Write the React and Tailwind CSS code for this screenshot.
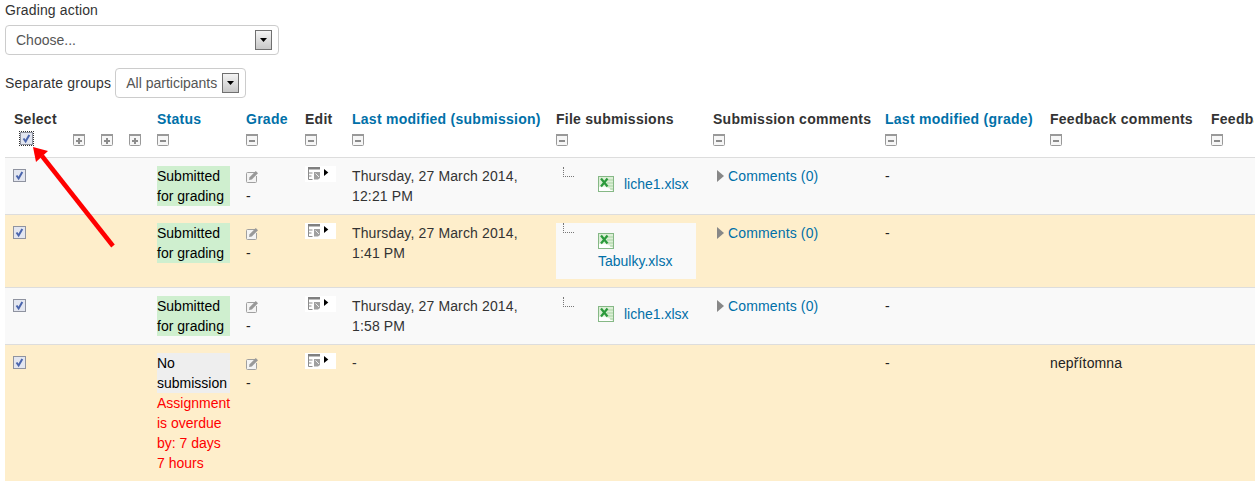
const ACCENT = 'text-[#0070a8]';

function Dropdown({ label, className }) {
  return (
    <div className={`flex h-[30px] items-center justify-between rounded border border-[#cccccc] bg-white tracking-normal text-[#555555] ${className}`}>
      <span>{label}</span>
      <span className="flex h-[20px] w-[17px] items-center justify-center border border-[#707070] bg-gradient-to-b from-[#f4f4f4] to-[#c8c8c8]">
        <svg width="7" height="4" viewBox="0 0 7 4"><path d="M0 0h7L3.5 4z" fill="#000" /></svg>
      </span>
    </div>
  );
}

function ToggleIcon({ plus }) {
  return (
    <svg width="12" height="12" viewBox="0 0 12 12" className="block">
      <rect x="0.5" y="0.5" width="11" height="11" rx="1" fill="#f6f6f6" stroke="#999" />
      <rect x="0" y="0" width="12" height="2" fill="#999" />
      <rect x="3" y="6" width="6" height="2" fill="#8c8c8c" />
      {plus && <rect x="5" y="4" width="2" height="6" fill="#8c8c8c" />}
    </svg>
  );
}

function Check() {
  return (
    <svg width="13" height="13" viewBox="0 0 13 13" className="block">
      <rect x="0.5" y="0.5" width="12" height="12" fill="#e3e6f0" stroke="#8f93a0" />
      <path d="M3.5 6.5 L5.6 9.5 L9.3 3" fill="none" stroke="#4a65ad" strokeWidth="2" />
    </svg>
  );
}

function PenIcon() {
  return (
    <svg width="13" height="13" viewBox="0 0 13 13" className="block">
      <path d="M9 2.5H1.5a1 1 0 0 0-1 1v8a1 1 0 0 0 1 1h8a1 1 0 0 0 1-1V6" fill="#f4f4f4" stroke="#a0a0a0" />
      <path d="M3 10 L3.6 7.2 L9.8 1 L12 3.2 L5.8 9.4z" fill="#999" />
    </svg>
  );
}

function EditMenu() {
  return (
    <span className="flex h-[16px] w-[31px] items-start bg-white pl-[3px] pt-[1px]">
      <svg width="21" height="13" viewBox="0 0 21 13">
        <rect x="0" y="0" width="12" height="2.5" fill="#808080" />
        <path d="M0.5 2v10.5h4M0.5 6h4M0.5 9h3" stroke="#8c8c8c" fill="none" />
        <path d="M6 5h6v6l-2 1.5H6z" fill="#a0a0a0" />
        <path d="M7.5 6.5 L11 10" stroke="#eeeeee" />
        <path d="M16 2 L20.3 5.5 L16 9z" fill="#000" />
      </svg>
    </span>
  );
}

function Excel() {
  return (
    <svg width="16" height="16" viewBox="0 0 16 16" className="block shrink-0">
      <rect x="0.5" y="0.5" width="15" height="15" fill="#dcefd6" stroke="#86b886" />
      <path d="M1 11 Q8 9 15 15 H1z" fill="#ffffff" />
      <path d="M9 4h6M9 7h6M10 10h5M12 13h3" stroke="#a9d3a4" />
      <path d="M3 2.5 L9.5 10.5 M9.5 2.5 L3 10.5" stroke="#2c9a3c" strokeWidth="2.2" />
    </svg>
  );
}

function TreeLine() {
  return <span className="block h-[10px] w-[11px] border-b border-l border-dotted border-[#777777]" />;
}

function FileCell({ name, stacked }) {
  if (stacked) {
    return (
      <div className="h-[56px] w-[140px] bg-[#f9f9f9] pl-[7px]">
        <TreeLine />
        <div className="ml-[35px]"><Excel /></div>
        <a className={`ml-[35px] mt-[2px] block tracking-normal ${ACCENT}`}>{name}</a>
      </div>
    );
  }
  return (
    <div className="h-[40px] pl-[7px] pt-[1px]">
      <TreeLine />
      <div className="ml-[35px] mt-[-3px] flex items-center gap-[10px]">
        <Excel />
        <a className={`tracking-normal ${ACCENT}`}>{name}</a>
      </div>
    </div>
  );
}

function Comments() {
  return (
    <div className="flex items-center gap-[4px] pl-[4px]">
      <svg width="7" height="12" viewBox="0 0 7 12"><path d="M0 0 L7 6 L0 12z" fill="#888" /></svg>
      <a className={ACCENT}>Comments (0)</a>
    </div>
  );
}

const headers = [
  { label: 'Select', icon: 'check' },
  { label: '', icon: 'plus' },
  { label: '', icon: 'plus' },
  { label: '', icon: 'plus' },
  { label: 'Status', link: true },
  { label: 'Grade', link: true },
  { label: 'Edit' },
  { label: 'Last modified (submission)', link: true },
  { label: 'File submissions' },
  { label: 'Submission comments' },
  { label: 'Last modified (grade)', link: true },
  { label: 'Feedback comments' },
  { label: 'Feedback files', clip: true },
];

const widths = ['w-[60px]', 'w-[28px]', 'w-[28px]', 'w-[28px]', 'w-[89px]', 'w-[59px]', 'w-[47px]', 'w-[204px]', 'w-[157px]', 'w-[172px]', 'w-[165px]', 'w-[161px]', 'w-[100px]'];

const rows = [
  { bg: 'bg-[#f9f9f9]', h: 'h-[57px]', date: ['Thursday, 27 March 2014,', '12:21 PM'], file: 'liche1.xlsx' },
  { bg: 'bg-[#feeecb]', h: 'h-[73px]', date: ['Thursday, 27 March 2014,', '1:41 PM'], file: 'Tabulky.xlsx', stacked: true },
  { bg: 'bg-[#f9f9f9]', h: 'h-[57px]', date: ['Thursday, 27 March 2014,', '1:58 PM'], file: 'liche1.xlsx' },
  { bg: 'bg-[#feeecb]', h: 'h-[136px]', date: ['-'], none: true },
];

const td = 'border-t border-[#dddddd] px-[8px] py-[8px] align-top';

export default function App() {
  return (
    <div className="relative h-[481px] w-[1255px] overflow-hidden bg-white pl-[5px] font-['Liberation_Sans',Arial,sans-serif] text-[14px] leading-[20px] tracking-[0.14px] text-[#333333]">
      <div className="h-[25px]">Grading action</div>
      <Dropdown label="Choose..." className="w-[274px] pl-[10px] pr-[6px]" />
      <div className="mt-[13px] flex items-center gap-[4px]">
        <span className="tracking-[0.18px]">Separate groups</span>
        <Dropdown label="All participants" className="w-[131px] pl-[10px] pr-[6px]" />
      </div>

      <table className="mt-[2px] w-[1298px] max-w-none table-fixed border-collapse">
        <colgroup>
          {widths.map((w, i) => <col key={i} className={w} />)}
        </colgroup>
        <thead>
          <tr className="h-[57px]">
            {headers.map((h, i) => (
              <th key={i} className={`overflow-hidden whitespace-nowrap pb-[10px] pt-[9px] text-left align-top font-bold tracking-[0.26px] ${i === 0 ? 'pl-[9px]' : 'pl-[8px]'} ${h.link ? ACCENT : ''}`}>
                <div className={h.clip ? 'h-[20px] w-[43px] overflow-hidden' : 'h-[20px]'}>{h.label}</div>
                {h.icon === 'check' ? (
                  <span className="ml-[6px] mt-[3px] block w-fit outline-1 outline-dotted outline-[#333333]"><Check /></span>
                ) : (
                  <div className="mt-[5px]"><ToggleIcon plus={h.icon === 'plus'} /></div>
                )}
              </th>
            ))}
          </tr>
        </thead>
        <tbody className="text-[#222222]">
          {rows.map((r, i) => (
            <tr key={i} className={`${r.bg} ${r.h}`}>
              <td className={td}><div className="mt-[3px]"><Check /></div></td>
              <td className={td} /><td className={td} /><td className={td} />
              <td className={td}>
                <div className={`w-[73px] tracking-normal text-black ${r.none ? 'bg-[#eeeeee]' : 'bg-[#cfefcf]'}`}>
                  {r.none ? <>No<br />submission</> : <>Submitted<br />for grading</>}
                </div>
                {r.none && <div className="w-[74px] tracking-normal text-[#ff0000]">Assignment is overdue by: 7 days 7 hours</div>}
              </td>
              <td className={td}><div className="mt-[4px]"><PenIcon /></div><div className="mt-[3px]">-</div></td>
              <td className={td}><EditMenu /></td>
              <td className={`${td} whitespace-nowrap text-[#333333]`}>{r.date.map((d) => <div key={d}>{d}</div>)}</td>
              <td className={td}>{r.file && <FileCell name={r.file} stacked={r.stacked} />}</td>
              <td className={td}>{r.file && <Comments />}</td>
              <td className={td}>-</td>
              <td className={td}>{r.none && 'nepřítomna'}</td>
              <td className={td} />
            </tr>
          ))}
        </tbody>
      </table>

      <svg className="absolute left-[25px] top-[140px]" width="100" height="110" viewBox="0 0 100 110">
        <path d="M88 106 L17 16" stroke="#ff0000" strokeWidth="4.5" fill="none" />
        <path d="M8 7 L23 11 L11 22z" fill="#ff0000" />
      </svg>
    </div>
  );
}
